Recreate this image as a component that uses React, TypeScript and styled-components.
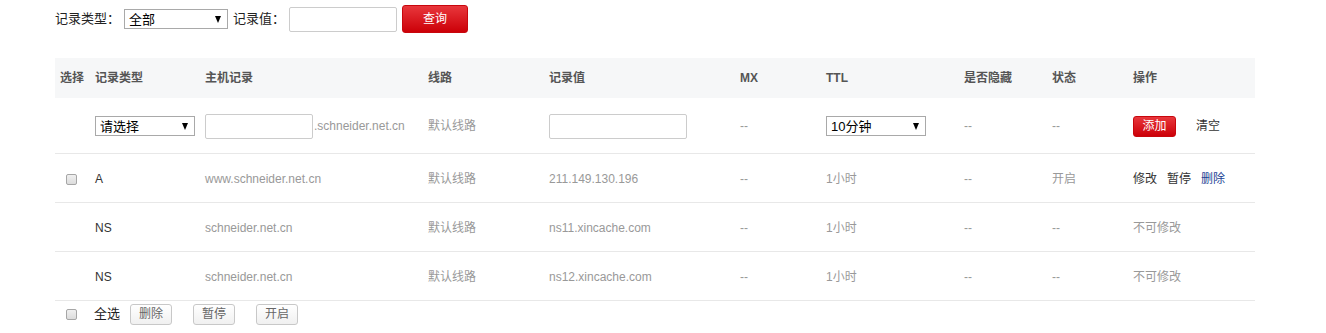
import React from "react";
import styled, { createGlobalStyle } from "styled-components";

const GlobalStyle = createGlobalStyle`
  body {
    margin: 0;
    background: #fff;
    font-family: "Liberation Sans", "Noto Sans CJK SC", sans-serif;
    line-height: 16px;
    color: #333;
  }
`;

const Page = styled.div`
  padding: 5px 0 0 55px;
  width: 1200px;
`;

const SearchBar = styled.div`
  display: flex;
  align-items: center;
  height: 28px;
  font-size: 13px;
  color: #222;
`;

const Label = styled.span`
  margin-right: 4px;
`;

const SelectWrap = styled.div<{ $w: number }>`
  position: relative;
  width: ${(p) => p.$w}px;
  height: 20px;
  box-sizing: border-box;
  border: 1px solid #a9a9a9;
  background: #fff;
  font-size: 13px;
  color: #000;
  display: flex;
  align-items: flex-end;
  padding: 0 0 0 4px;
  margin-right: 5px;
  &::after {
    content: "";
    position: absolute;
    right: 6px;
    top: 6px;
    border-left: 3.5px solid transparent;
    border-right: 3.5px solid transparent;
    border-top: 7px solid #000;
  }
`;

const TextInput = styled.input<{ $w: number }>`
  width: ${(p) => p.$w}px;
  height: 25px;
  box-sizing: border-box;
  border: 1px solid #ccc;
  border-radius: 2px;
  padding: 0 4px;
  outline: none;
  margin: 0;
`;

const Gap = styled.span`
  width: 5px;
`;

const RedButton = styled.button<{ $w: number; $h: number }>`
  width: ${(p) => p.$w}px;
  height: ${(p) => p.$h}px;
  border: 1px solid #c8070d;
  border-radius: 3px;
  background: linear-gradient(#e8373c, #cc0008);
  color: #fff;
  font-family: inherit;
  font-size: 12px;
  line-height: 16px;
  padding: 0;
  cursor: pointer;
`;

const Table = styled.div`
  margin-top: 25px;
  width: 1200px;
  font-size: 12px;
`;

const cols = "40px 110px 223px 121px 191px 86px 138px 88px 81px 122px";

const HeadRow = styled.div`
  display: grid;
  grid-template-columns: ${cols};
  height: 40px;
  align-items: center;
  background: #f6f7f8;
  color: #555;
  font-weight: bold;
`;

const Row = styled.div<{ $h: number; $pt?: number }>`
  display: grid;
  grid-template-columns: ${cols};
  height: ${(p) => p.$h}px;
  padding-top: ${(p) => p.$pt ?? 0}px;
  align-items: center;
  border-bottom: 1px solid #e8e8e8;
  box-sizing: border-box;
  color: #999;
`;

const Cell = styled.div<{ $dark?: boolean }>`
  display: flex;
  align-items: center;
  color: ${(p) => (p.$dark ? "#333" : "inherit")};
  white-space: nowrap;
`;

const HeadCell = styled.div<{ $pl?: number }>`
  padding-left: ${(p) => p.$pl ?? 0}px;
`;

const Check = styled.span`
  display: inline-block;
  width: 11px;
  height: 11px;
  box-sizing: border-box;
  border: 1px solid #a6a6a6;
  border-radius: 2px;
  background: linear-gradient(#f0f0f0, #dcdcdc);
  margin-left: 11px;
`;

const Suffix = styled.span`
  color: #999;
  margin-left: 1px;
`;

const Link = styled.span<{ $c: string }>`
  color: ${(p) => p.$c};
  margin-right: 10px;
`;

const Plain = styled.span`
  color: #333;
  margin-left: 20px;
`;

const Footer = styled.div`
  display: flex;
  align-items: center;
  height: 26px;
  font-size: 13px;
  color: #222;
`;

const SelectAll = styled.span`
  margin: 0 10px 0 17px;
`;

const GreyButton = styled.button`
  width: 42px;
  height: 21px;
  margin-right: 21px;
  border: 1px solid #c8c8c8;
  border-radius: 3px;
  background: linear-gradient(#fff, #f0f0f0);
  color: #666;
  font-family: inherit;
  font-size: 12px;
  line-height: 16px;
  padding: 0;
`;

const records = [
  { type: "A", host: "www.schneider.net.cn", value: "211.149.130.196", state: "开启", editable: true },
  { type: "NS", host: "schneider.net.cn", value: "ns11.xincache.com", state: "--", editable: false },
  { type: "NS", host: "schneider.net.cn", value: "ns12.xincache.com", state: "--", editable: false },
];

export default function App() {
  return (
    <Page>
      <GlobalStyle />
      <SearchBar>
        <Label>记录类型：</Label>
        <SelectWrap $w={104}>全部</SelectWrap>
        <Label>记录值：</Label>
        <TextInput $w={108} />
        <Gap />
        <RedButton $w={66} $h={28}>查询</RedButton>
      </SearchBar>

      <Table>
        <HeadRow>
          <HeadCell $pl={5}>选择</HeadCell>
          <HeadCell>记录类型</HeadCell>
          <HeadCell>主机记录</HeadCell>
          <HeadCell>线路</HeadCell>
          <HeadCell>记录值</HeadCell>
          <HeadCell>MX</HeadCell>
          <HeadCell>TTL</HeadCell>
          <HeadCell>是否隐藏</HeadCell>
          <HeadCell>状态</HeadCell>
          <HeadCell>操作</HeadCell>
        </HeadRow>
        <Row $h={56} $pt={1}>
          <Cell />
          <Cell>
            <SelectWrap $w={100}>请选择</SelectWrap>
          </Cell>
          <Cell>
            <TextInput $w={108} />
            <Suffix>.schneider.net.cn</Suffix>
          </Cell>
          <Cell>默认线路</Cell>
          <Cell>
            <TextInput $w={138} />
          </Cell>
          <Cell>--</Cell>
          <Cell>
            <SelectWrap $w={100}>10分钟</SelectWrap>
          </Cell>
          <Cell>--</Cell>
          <Cell>--</Cell>
          <Cell>
            <RedButton $w={43} $h={21}>添加</RedButton>
            <Plain>清空</Plain>
          </Cell>
        </Row>
        {records.map((r, i) => (
          <Row $h={49} $pt={2} key={i}>
            <Cell>{r.editable && <Check />}</Cell>
            <Cell $dark>{r.type}</Cell>
            <Cell>{r.host}</Cell>
            <Cell>默认线路</Cell>
            <Cell>{r.value}</Cell>
            <Cell>--</Cell>
            <Cell>1小时</Cell>
            <Cell>--</Cell>
            <Cell>{r.state}</Cell>
            <Cell>
              {r.editable ? (
                <>
                  <Link $c="#333">修改</Link>
                  <Link $c="#333">暂停</Link>
                  <Link $c="#1c3f94">删除</Link>
                </>
              ) : (
                "不可修改"
              )}
            </Cell>
          </Row>
        ))}
        <Footer>
          <Check />
          <SelectAll>全选</SelectAll>
          <GreyButton>删除</GreyButton>
          <GreyButton>暂停</GreyButton>
          <GreyButton>开启</GreyButton>
        </Footer>
      </Table>
    </Page>
  );
}
